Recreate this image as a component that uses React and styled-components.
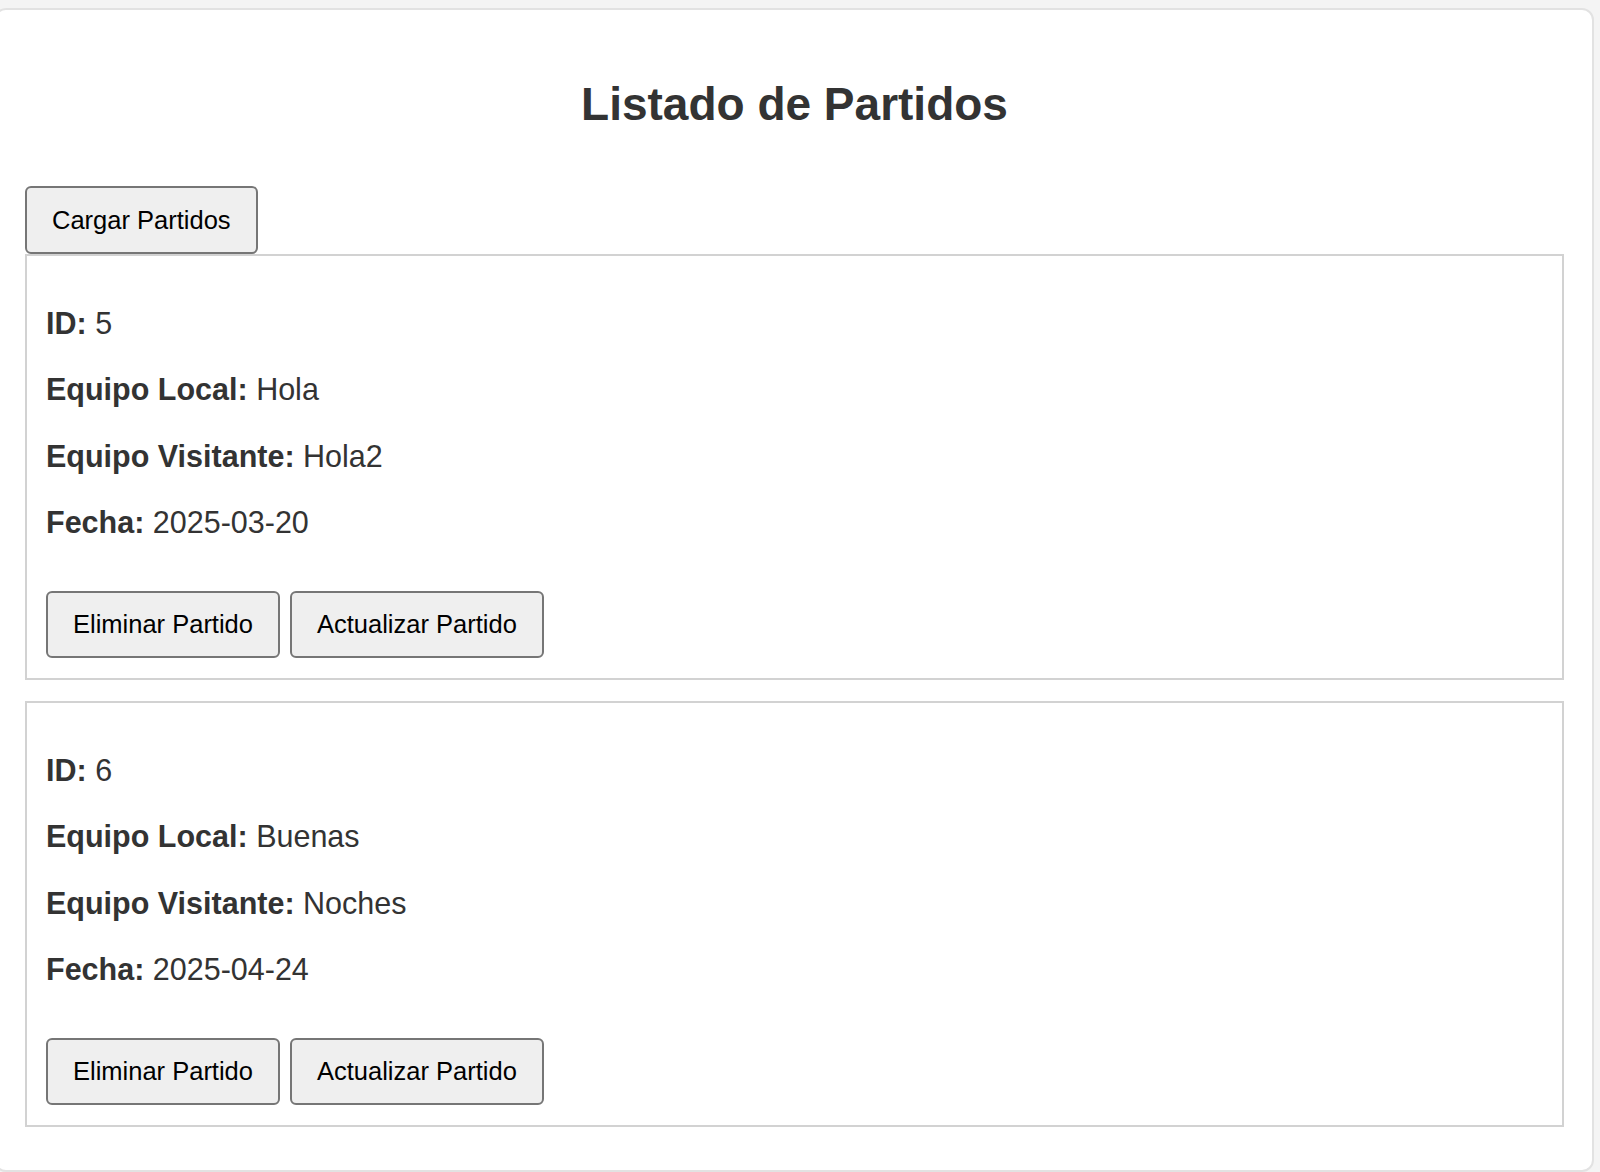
import React from 'react';
import styled, { createGlobalStyle } from 'styled-components';

const GlobalStyle = createGlobalStyle`
	html, body {
		margin: 0;
		padding: 0;
		background: #f4f4f4;
		font-family: 'Liberation Sans', Arial, sans-serif;
		overflow: hidden;
	}
`;

const partidos = [
	{ id: 5, local: 'Hola', visitante: 'Hola2', fecha: '2025-03-20' },
	{ id: 6, local: 'Buenas', visitante: 'Noches', fecha: '2025-04-24' },
];

const App = () => {
	return (
		<>
			<GlobalStyle />
			<Container>
				<Title>Listado de Partidos</Title>
				<Button>Cargar Partidos</Button>
				{partidos.map((p) => (
					<Card key={p.id}>
						<Field>
							<strong>ID:</strong> {p.id}
						</Field>
						<Field>
							<strong>Equipo Local:</strong> {p.local}
						</Field>
						<Field>
							<strong>Equipo Visitante:</strong> {p.visitante}
						</Field>
						<Field>
							<strong>Fecha:</strong> {p.fecha}
						</Field>
						<Actions>
							<Button>Eliminar Partido</Button>
							<Button>Actualizar Partido</Button>
						</Actions>
					</Card>
				))}
			</Container>
		</>
	);
};

const Container = styled.div`
	box-sizing: border-box;
	margin: 8px 6px 0 -6px;
	min-height: 1164px;
	padding: 68px 28px 20px 29px;
	background: #fff;
	border: 2px solid #e2e2e2;
	border-radius: 12px;
	color: #333;
`;

const Title = styled.h2`
	margin: 0 0 55px;
	font-size: 46px;
	line-height: 53px;
	font-weight: bold;
	text-align: center;
	color: #333;
`;

const Button = styled.button`
	box-sizing: border-box;
	height: 68px;
	padding: 0 25px;
	font-family: 'Liberation Sans', Arial, sans-serif;
	font-size: 25.5px;
	color: #000;
	background: #efefef;
	border: 2px solid #767676;
	border-radius: 6px;
	cursor: pointer;
`;

const Card = styled.div`
	box-sizing: border-box;
	padding: 18px 19px 20px;
	border: 2px solid #d2d2d2;
	background: #fff;
	& + & {
		margin-top: 21px;
	}
`;

const Field = styled.p`
	margin: 31.5px 0;
	font-size: 30.5px;
	line-height: 35px;
	color: #333;
	strong {
		font-weight: bold;
	}
`;

const Actions = styled.div`
	display: flex;
	gap: 10px;
	margin-top: 51px;
	${Button} {
		height: 67px;
	}
`;

export default App;
